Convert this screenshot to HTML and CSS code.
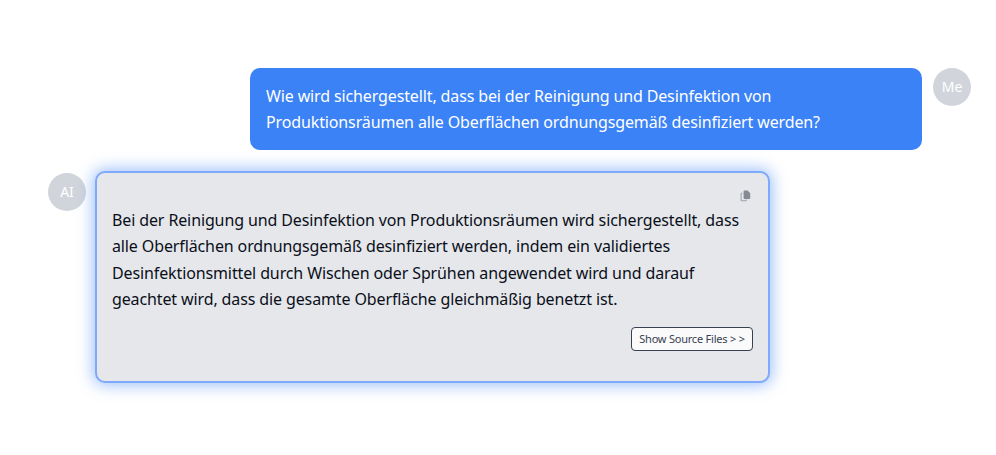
FILE: index.html
```html
<!DOCTYPE html>
<html lang="de">
<head>
<meta charset="utf-8">
<title>Chat</title>
<link rel="stylesheet" href="styles.css">
</head>
<body>
<main class="chat">
  <div class="row row-user">
    <div class="bubble bubble-user">Wie wird sichergestellt, dass bei der Reinigung und Desinfektion von<br>Produktionsräumen alle Oberflächen ordnungsgemäß desinfiziert werden?</div>
    <div class="avatar">Me</div>
  </div>
  <div class="row row-ai">
    <div class="avatar avatar-ai">AI</div>
    <div class="bubble bubble-ai">
      <div class="copy-row">
        <svg class="copy-icon" viewBox="0 0 11 12" width="11" height="12" aria-hidden="true">
          <path d="M.6 3.6a.8.8 0 0 1 .8-.8h1v1H1.6v6.4h4.2v-.6h1v.8a.8.8 0 0 1-.8.8H1.4a.8.8 0 0 1-.8-.8z" fill="#9ca3af"/>
          <path d="M4.4.6h3.2l2.6 2.6v5a.8.8 0 0 1-.8.8H4.4a.8.8 0 0 1-.8-.8V1.4a.8.8 0 0 1 .8-.8z" fill="#858a93"/>
        </svg>
      </div>
      <p class="answer">Bei der Reinigung und Desinfektion von Produktionsräumen wird sichergestellt, dass<br>alle Oberflächen ordnungsgemäß desinfiziert werden, indem ein validiertes<br>Desinfektionsmittel durch Wischen oder Sprühen angewendet wird und darauf<br>geachtet wird, dass die gesamte Oberfläche gleichmäßig benetzt ist.</p>
      <div class="actions"><button class="source-btn" type="button">Show Source Files &gt; &gt;</button></div>
    </div>
  </div>
</main>
</body>
</html>
```
FILE: styles.css
```css
* { box-sizing: border-box; }
html, body { margin: 0; background: #fff; }
body {
  height: 455px;
  overflow: hidden;
  font-family: "Noto Sans", "Open Sans", sans-serif;
  font-size: 16px;
  line-height: 26.4px;
}
.chat {
  display: flex;
  flex-direction: column;
  gap: 22px;
  padding: 68px 25px 0 48px;
}
.row { display: flex; gap: 10px; align-items: flex-start; }
.row-user { justify-content: flex-end; }
.avatar {
  flex: none;
  width: 38px;
  height: 38px;
  border-radius: 50%;
  background: #d1d5db;
  color: #fff;
  font-size: 14px;
  display: flex;
  align-items: center;
  justify-content: center;
}
.avatar-ai { margin-top: 1px; }
.bubble { border-radius: 10px; }
.bubble-user {
  width: 672px;
  height: 82px;
  padding: 15px 16px;
  background: #3b82f6;
  color: #fff;
  margin-right: 1px;
  letter-spacing: -0.13px;
}
.bubble-ai {
  width: 675px;
  height: 212px;
  margin: -1px 0 0 -1px;
  padding: 15px;
  background: #e5e7eb;
  color: #0b0f19;
  border: 2px solid #7fa9fa;
  box-shadow: 0 0 15px 2px rgba(59, 130, 246, 0.5);
  display: flex;
  flex-direction: column;
}
.copy-row { display: flex; justify-content: flex-end; height: 17px; }
.copy-icon { margin: 2px 2px 0 0; }
.answer { margin: 2px 0 0; letter-spacing: -0.12px; }
.actions { display: flex; justify-content: flex-end; margin-top: 14px; }
.source-btn {
  width: 122px;
  height: 24px;
  padding: 0;
  background: #fafafa;
  border: 1px solid #374151;
  border-radius: 4px;
  color: #374151;
  font-family: inherit;
  font-size: 11px;
  line-height: 22px;
  letter-spacing: -0.22px;
}
```
